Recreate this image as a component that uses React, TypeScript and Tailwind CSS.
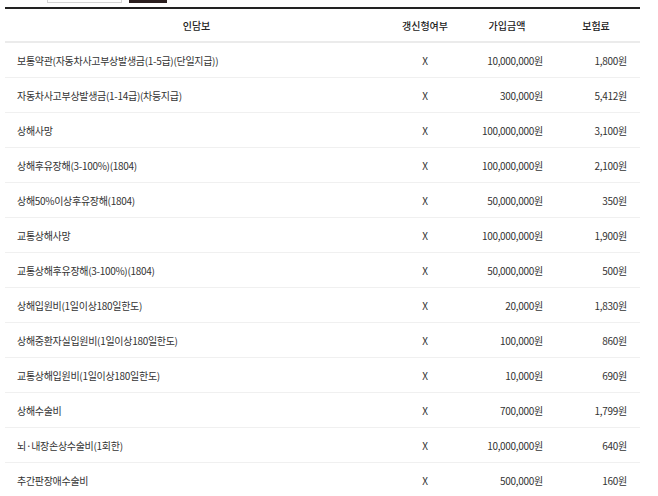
interface Coverage {
  name: string;
  renew: string;
  amount: string;
  premium: string;
}

const rows: Coverage[] = [
  { name: '보통약관(자동차사고부상발생금(1-5급)(단일지급))', renew: 'X', amount: '10,000,000원', premium: '1,800원' },
  { name: '자동차사고부상발생금(1-14급)(차등지급)', renew: 'X', amount: '300,000원', premium: '5,412원' },
  { name: '상해사망', renew: 'X', amount: '100,000,000원', premium: '3,100원' },
  { name: '상해후유장해(3-100%)(1804)', renew: 'X', amount: '100,000,000원', premium: '2,100원' },
  { name: '상해50%이상후유장해(1804)', renew: 'X', amount: '50,000,000원', premium: '350원' },
  { name: '교통상해사망', renew: 'X', amount: '100,000,000원', premium: '1,900원' },
  { name: '교통상해후유장해(3-100%)(1804)', renew: 'X', amount: '50,000,000원', premium: '500원' },
  { name: '상해입원비(1일이상180일한도)', renew: 'X', amount: '20,000원', premium: '1,830원' },
  { name: '상해중환자실입원비(1일이상180일한도)', renew: 'X', amount: '100,000원', premium: '860원' },
  { name: '교통상해입원비(1일이상180일한도)', renew: 'X', amount: '10,000원', premium: '690원' },
  { name: '상해수술비', renew: 'X', amount: '700,000원', premium: '1,799원' },
  { name: '뇌·내장손상수술비(1회한)', renew: 'X', amount: '10,000,000원', premium: '640원' },
  { name: '추간판장애수술비', renew: 'X', amount: '500,000원', premium: '160원' },
];

const cols = 'grid grid-cols-[383px_74px_90px_88px]';

export default function App() {
  return (
    <div
      className="w-[658px] h-[496px] overflow-hidden bg-white text-[#333]"
      style={{ fontFamily: '"Noto Sans CJK KR", "Noto Sans", sans-serif' }}
    >
      {/* search bar, cut off at the top */}
      <div className="flex items-end h-[3px] overflow-hidden">
        <div className="ml-[47px] w-[75px] h-[20px] border border-[#d5d5d5] bg-white" />
        <div className="ml-[7px] w-[38px] h-[20px] bg-[#2b1f1f]" />
      </div>

      <div className="ml-[5px] mt-[4px] w-[635px] border-t-2 border-[#222]">
        <div className={`${cols} h-[34px] items-center border-b-2 border-[#ebebeb] text-[10px] font-medium text-[#222]`}>
          <div className="text-center">인담보</div>
          <div className="text-center">갱신형여부</div>
          <div className="text-center">가입금액</div>
          <div className="text-center">보험료</div>
        </div>

        {rows.map((row) => (
          <div
            key={row.name}
            className={`${cols} h-[35px] items-center border-b border-[#f0f0f0] text-[10px] tracking-[-0.03em]`}
          >
            <div className="pl-[12px] truncate">{row.name}</div>
            <div className="text-center">{row.renew}</div>
            <div className="text-right pr-[9px]">{row.amount}</div>
            <div className="text-right pr-[13px]">{row.premium}</div>
          </div>
        ))}
      </div>
    </div>
  );
}
